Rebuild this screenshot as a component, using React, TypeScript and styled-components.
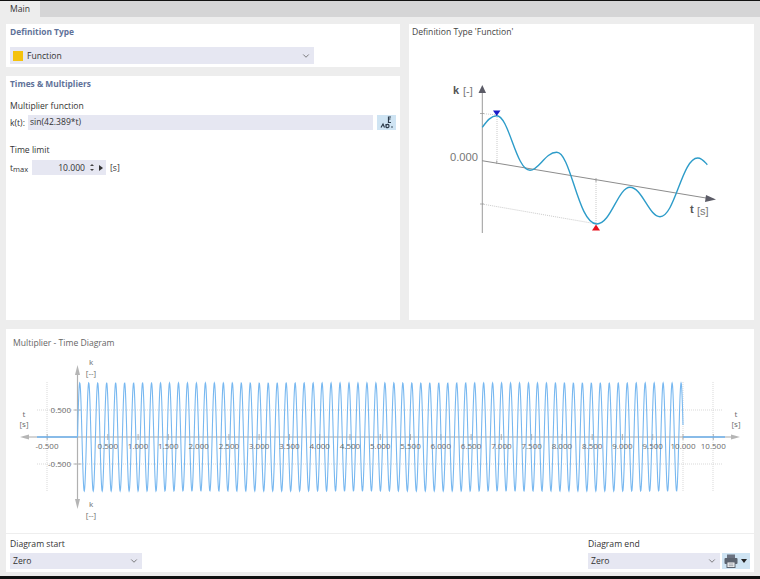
import React from 'react';
import styled, { createGlobalStyle } from 'styled-components';
import { ChevronDown } from 'lucide-react';

const GlobalStyle = createGlobalStyle`
  html, body {
    margin: 0;
    padding: 0;
    background: #ededed;
  }
  * {
    box-sizing: border-box;
  }
`;

const Page = styled.div`
  width: 760px;
  height: 579px;
  overflow: hidden;
  display: flex;
  flex-direction: column;
  background: #ededed;
  border-top: 1px solid #111;
  border-bottom: 3px solid #111;
  font-family: 'Open Sans', 'Noto Sans', sans-serif;
  font-size: 8.6px;
  color: #333;
`;

const TabBar = styled.div`
  height: 16px;
  flex: none;
  display: flex;
  background: #d5d5d6;
`;

const Tab = styled.div`
  width: 40px;
  padding-left: 10px;
  line-height: 16px;
  background: #ededed;
`;

const Content = styled.div`
  flex: 1;
  min-height: 0;
  display: grid;
  grid-template-columns: 394px 345px;
  grid-template-rows: 296px 243px;
  column-gap: 9px;
  row-gap: 9px;
  padding: 7px 6px 3px;
`;

const Panel = styled.section`
  background: #fff;
  min-width: 0;
`;

const LeftColumn = styled.div`
  display: grid;
  grid-template-rows: 43px 244px;
  row-gap: 9px;
`;

const SectionTitle = styled.h2`
  margin: 0;
  padding: 2px 0 0 4px;
  font-size: 8.4px;
  line-height: 12px;
  font-weight: 700;
  color: #5f7299;
`;

const Select = styled.div<{ $width: number; $height?: number }>`
  width: ${(p) => p.$width}px;
  height: ${(p) => p.$height ?? 17}px;
  display: flex;
  align-items: center;
  gap: 4px;
  padding: 0 3px;
  background: #e6e7f2;
  color: #333;
`;

const SelectText = styled.span`
  flex: 1;
`;

const Swatch = styled.span`
  width: 10px;
  height: 10px;
  background: #f4c20d;
`;

const DefinitionBody = styled.div`
  padding: 9px 4px 0;
`;

const TimesBody = styled.div`
  padding: 10px 4px 0;
`;

const FieldLabel = styled.div`
  line-height: 12px;
`;

const Row = styled.div`
  display: flex;
  align-items: center;
  gap: 3px;
  height: 15px;
  margin: 3px 0 0;
`;

const TextInput = styled.div`
  flex: 1;
  height: 15px;
  line-height: 15px;
  padding-left: 2px;
  background: #e6e7f2;
`;

const IconButton = styled.div`
  width: 19px;
  height: 15px;
  margin-left: 1px;
  display: flex;
  align-items: center;
  justify-content: center;
  background: #cfe4f3;
`;

const LimitBlock = styled.div`
  margin-top: 14px;
`;

const LimitRow = styled(Row)`
  height: 15px;
  gap: 4px;
  margin-top: 4px;
`;

const LimitLabel = styled.span`
  width: 18px;
  font-size: 8.6px;
  sub {
    font-size: 7.5px;
    vertical-align: -1px;
  }
`;

const Spin = styled.div`
  width: 74px;
  height: 15px;
  display: flex;
  align-items: center;
  justify-content: flex-end;
  gap: 5px;
  padding-right: 3px;
  background: #e6e7f2;
`;

const Stepper = styled.span`
  display: flex;
  flex-direction: column;
  gap: 3px;
`;

const Tri = styled.span<{ $dir: 'up' | 'down' | 'right' }>`
  width: 0;
  height: 0;
  ${(p) =>
    p.$dir === 'right'
      ? 'border-left: 4px solid #333; border-top: 3px solid transparent; border-bottom: 3px solid transparent;'
      : `border-left: 2px solid transparent; border-right: 2px solid transparent; border-${
          p.$dir === 'up' ? 'bottom' : 'top'
        }: 2px solid #444;`}
`;

const MenuCaret = styled.span`
  width: 0;
  height: 0;
  border-left: 3px solid transparent;
  border-right: 3px solid transparent;
  border-top: 4px solid #222;
`;

const Caption = styled.div`
  padding: 2px 0 0 3px;
  line-height: 12px;
  color: #444;
`;

const SketchSvg = styled.svg`
  display: block;
  width: 345px;
  height: 280px;
`;

const BottomPanel = styled(Panel)`
  grid-column: 1 / span 2;
  display: flex;
  flex-direction: column;
`;

const DiagramTitle = styled.div`
  padding: 8px 0 0 7px;
  line-height: 12px;
  color: #666;
`;

const DiagramSvg = styled.svg`
  display: block;
  width: 748px;
  height: 184px;
  flex: none;
  font-family: 'Open Sans', 'Noto Sans', sans-serif;
`;

const Footer = styled.div`
  flex: 1;
  display: flex;
  justify-content: space-between;
  padding: 4px 4px 0;
  border-top: 1px solid #eeeeee;
`;

const FooterGroup = styled.div`
  display: flex;
  flex-direction: column;
  gap: 3px;
`;

const FooterControls = styled.div`
  display: flex;
  gap: 2px;
`;

const PrintButton = styled.div`
  width: 28px;
  height: 16px;
  display: flex;
  align-items: center;
  justify-content: space-between;
  padding: 0 3px 0 2px;
  background: #cfe4f3;
`;

const X0 = 77.5;
const PX_PER_S = 60.55;
const Y0 = 437;
const AMP = 54;

const wavePath = () => {
  const pts: string[] = [];
  for (let t = 0; t <= 10; t += 0.004) {
    const x = X0 + t * PX_PER_S;
    const y = Y0 - AMP * Math.sin(42.389 * t);
    pts.push(`${x.toFixed(2)},${y.toFixed(2)}`);
  }
  return 'M' + pts.join('L');
};

const ticks = Array.from({ length: 21 }, (_, i) => (i + 1) * 0.5);

const tickMarks = () =>
  [-0.5, ...ticks]
    .map((t) => `M${(X0 + t * PX_PER_S).toFixed(1)} 434V440`)
    .join('') + 'M74 410H81M74 464H81';

function FunctionIcon() {
  return (
    <svg width="14" height="13" viewBox="0 0 14 13">
      <path d="M11 1H8.500V3H10.500M8.500 3V6.500H11" fill="none" stroke="#2b3a4a" strokeWidth="1.2" />
      <path d="M1 11.500L3 8L4.500 11.500M6 8V11.500M6 9.500C7 8 9 8 9 10C9 12 7 12 6 11" fill="none" stroke="#2b3a4a" strokeWidth="1.200" />
      <circle cx="12" cy="11" r="0.800" fill="#2b3a4a" />
    </svg>
  );
}

function PrintIcon() {
  return (
    <svg width="14" height="14" viewBox="0 0 14 14">
      <rect x="3" y="0.500" width="8" height="3.500" fill="#6b7280" />
      <rect x="0.500" y="4" width="13" height="6" rx="1" fill="#5c6470" />
      <rect x="3" y="8" width="8" height="5.500" fill="#fff" stroke="#5c6470" />
      <path d="M4.500 10H9.500M4.500 11.800H9.500" stroke="#5c6470" strokeWidth="0.700" />
    </svg>
  );
}

function DefinitionSketch() {
  return (
    <SketchSvg viewBox="409 38 345 280">
      <g stroke="#bdbdbd" strokeWidth="0.8" strokeDasharray="1 1" fill="none">
        <path d="M482 113.500L497 115" />
        <path d="M497 115V162" />
        <path d="M482 204L597 224" />
        <path d="M596 180V224" />
      </g>
      <path d="M482.300 90V233" stroke="#9a9a9a" strokeWidth="1" />
      <path d="M482 160.700L706 198" stroke="#8c8c8c" strokeWidth="1" />
      <path d="M480 113.500H484M480 204H484M496.700 160.500V164M596 178V182" stroke="#999" strokeWidth="0.800" />
      <path d="M478.500 93L482.300 85L486 93Z" fill="#5b5b66" />
      <path d="M706 195L716 199.500L705 202Z" fill="#5b5b66" />
      <path
        d="M482.300 127.300C487 121 491 115.700 496.700 115.700C509 115.700 516 170.300 530 170.300C539 170.300 545 152.300 556.700 152.300C571 152.300 578 224 596.700 224C611 224 618 187.300 630 187.300C642 187.300 649 216.700 660 216.700C675 216.700 682 158 697.700 158C702 158 704 161 707.300 164.700"
        fill="none"
        stroke="#2d9cc9"
        strokeWidth="1.400"
      />
      <path d="M493 110.500H500.500L496.700 116Z" fill="#1a1ac8" />
      <path d="M592 230.500H600L596 224.500Z" fill="#e8101c" />
      <text x="453" y="94" fontFamily="'Liberation Sans', sans-serif" fontSize="11" fontWeight="700" fill="#555">k</text>
      <text x="463" y="95" fontFamily="'Liberation Sans', sans-serif" fontSize="11" fill="#777">[-]</text>
      <text x="450" y="161" fontFamily="'Liberation Sans', sans-serif" fontSize="11.200" fill="#777">0.000</text>
      <text x="690" y="213" fontFamily="'Liberation Sans', sans-serif" fontSize="11" fontWeight="700" fill="#555">t</text>
      <text x="697" y="215" fontFamily="'Liberation Sans', sans-serif" fontSize="11" fill="#777">[s]</text>
    </SketchSvg>
  );
}

function MultiplierDiagram() {
  const labelColor = '#6a6a6a';
  return (
    <DiagramSvg viewBox="6 349 748 184">
      <g stroke="#cfcfcf" strokeWidth="0.800" strokeDasharray="1 1" fill="none">
        <path d="M37 410H723M37 464H723" />
        <path d="M47 382V492M683 382V492M713 382V492" />
      </g>
      <path d="M28 437H732" stroke="#a9a9a9" strokeWidth="1.200" />
      <path d={tickMarks()} stroke="#a0a0a0" strokeWidth="0.800" />
      <path d="M20 437L29 434.500V439.500Z" fill="#b5b5b5" />
      <path d="M740 437L731 434.500V439.500Z" fill="#b5b5b5" />
      <path d="M77.500 372V502" stroke="#b0b0b0" strokeWidth="1.200" />
      <path d="M77.500 365L75 375H80Z" fill="#b5b5b5" />
      <path d="M77.500 509L75 499H80Z" fill="#b5b5b5" />
      <path d={`M37 437H${X0}M683 437H725`} stroke="#6fb2ee" strokeWidth="1.600" />
      <path d={wavePath()} fill="none" stroke="#78b8f0" strokeWidth="1.100" />
      <g fontSize="8" fill={labelColor}>
        <text x="47" y="449" textAnchor="middle">-0.500</text>
        {ticks.map((t) => (
          <text key={t} x={X0 + t * PX_PER_S} y="449" textAnchor="middle">
            {t.toFixed(3)}
          </text>
        ))}
        <text x="71" y="413" textAnchor="end">0.500</text>
        <text x="71" y="467" textAnchor="end">-0.500</text>
        <text x="24" y="417" textAnchor="middle">t</text>
        <text x="24" y="427" textAnchor="middle">[s]</text>
        <text x="736" y="417" textAnchor="middle">t</text>
        <text x="736" y="427" textAnchor="middle">[s]</text>
        <text x="91" y="365" textAnchor="middle">k</text>
        <text x="91" y="376" textAnchor="middle">[--]</text>
        <text x="91" y="507" textAnchor="middle">k</text>
        <text x="91" y="518" textAnchor="middle">[--]</text>
      </g>
    </DiagramSvg>
  );
}

export default function App() {
  return (
    <Page>
      <GlobalStyle />
      <TabBar>
        <Tab>Main</Tab>
      </TabBar>
      <Content>
        <LeftColumn>
          <Panel>
            <SectionTitle>Definition Type</SectionTitle>
            <DefinitionBody>
              <Select $width={304}>
                <Swatch />
                <SelectText>Function</SelectText>
                <ChevronDown size={10} color="#666" />
              </Select>
            </DefinitionBody>
          </Panel>
          <Panel>
            <SectionTitle>Times &amp; Multipliers</SectionTitle>
            <TimesBody>
              <FieldLabel>Multiplier function</FieldLabel>
              <Row>
                <span>k(t):</span>
                <TextInput>sin(42.389*t)</TextInput>
                <IconButton>
                  <FunctionIcon />
                </IconButton>
              </Row>
              <LimitBlock>
                <FieldLabel>Time limit</FieldLabel>
                <LimitRow>
                  <LimitLabel>
                    t<sub>max</sub>
                  </LimitLabel>
                  <Spin>
                    <span>10.000</span>
                    <Stepper>
                      <Tri $dir="up" />
                      <Tri $dir="down" />
                    </Stepper>
                    <Tri $dir="right" />
                  </Spin>
                  <span>[s]</span>
                </LimitRow>
              </LimitBlock>
            </TimesBody>
          </Panel>
        </LeftColumn>
        <Panel>
          <Caption>Definition Type 'Function'</Caption>
          <DefinitionSketch />
        </Panel>
        <BottomPanel>
          <DiagramTitle>Multiplier - Time Diagram</DiagramTitle>
          <MultiplierDiagram />
          <Footer>
            <FooterGroup>
              <span>Diagram start</span>
              <Select $width={132} $height={16}>
                <SelectText>Zero</SelectText>
                <ChevronDown size={10} color="#666" />
              </Select>
            </FooterGroup>
            <FooterGroup>
              <span>Diagram end</span>
              <FooterControls>
                <Select $width={132} $height={16}>
                  <SelectText>Zero</SelectText>
                  <ChevronDown size={10} color="#666" />
                </Select>
                <PrintButton>
                  <PrintIcon />
                  <MenuCaret />
                </PrintButton>
              </FooterControls>
            </FooterGroup>
          </Footer>
        </BottomPanel>
      </Content>
    </Page>
  );
}
